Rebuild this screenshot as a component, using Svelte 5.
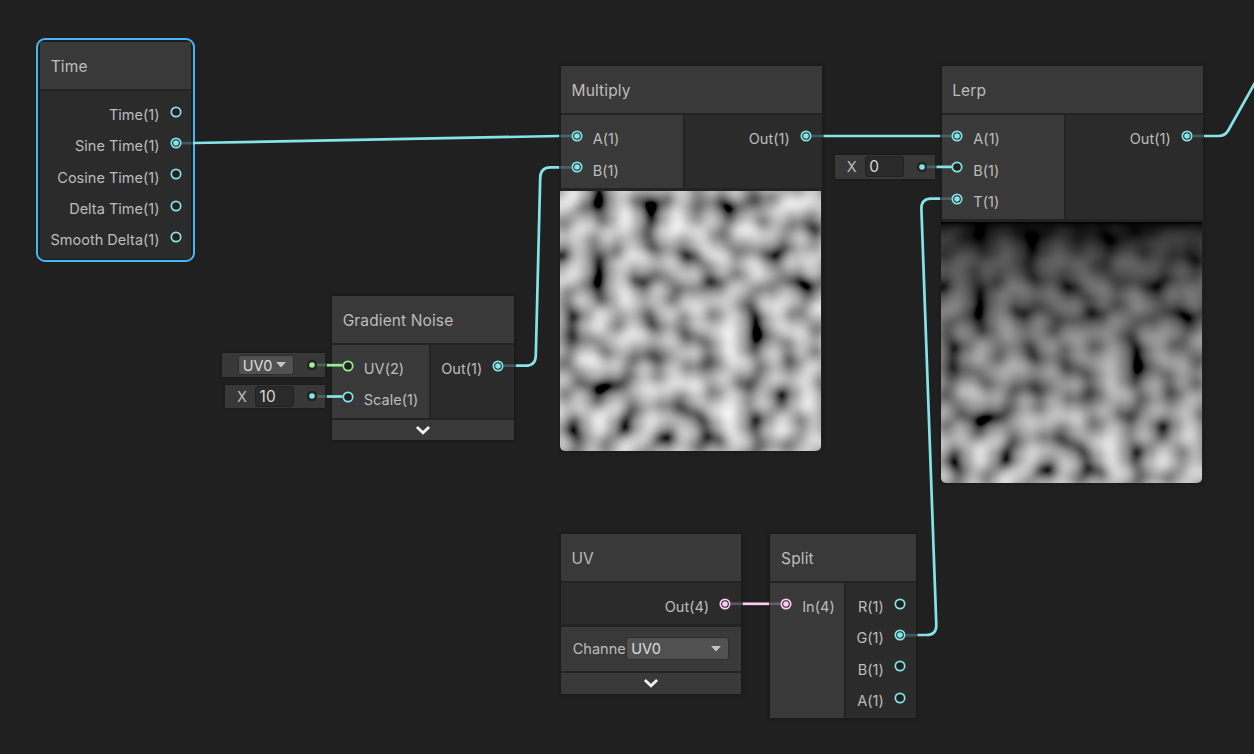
<script>
  const CYAN = '#84e4e7';
  const PINK = '#fbcbf4';
  const GREEN = '#9aef92';

  const out = (label, on = false, color = CYAN) => ({ label, on, color });

  const nodes = [
    {
      title: 'Time', x: 40, y: 42, w: 151, selected: true,
      outputs: [out('Time(1)'), out('Sine Time(1)', true), out('Cosine Time(1)'), out('Delta Time(1)'), out('Smooth Delta(1)')]
    },
    {
      title: 'Multiply', x: 560.9, y: 66.3, w: 260.7, left: 122.3, preview: 'flat',
      inputs: [out('A(1)', true), out('B(1)', true)], outputs: [out('Out(1)', true)]
    },
    {
      title: 'Lerp', x: 941.5, y: 66.3, w: 261, left: 122.7, preview: 'fade',
      inputs: [out('A(1)', true), out('B(1)'), out('T(1)', true)], outputs: [out('Out(1)', true)]
    },
    {
      title: 'Gradient Noise', x: 332, y: 296, w: 182, left: 96.6, footer: true,
      inputs: [out('UV(2)', false, GREEN), out('Scale(1)')], outputs: [out('Out(1)', true)]
    },
    { title: 'UV', x: 560.7, y: 534, w: 180.3, outputs: [out('Out(4)', true, PINK)], channel: true, footer: true },
    {
      title: 'Split', x: 770.4, y: 534, w: 145.2, left: 73.6,
      inputs: [out('In(4)', true, PINK)], outputs: [out('R(1)'), out('G(1)', true), out('B(1)'), out('A(1)')]
    }
  ];

  const slots = [
    { kind: 'select', value: 'UV0', x: 221.7, y: 353, w: 103.7, h: 24, color: GREEN },
    { kind: 'number', value: '10', x: 225, y: 384.5, w: 100.4, h: 23.7, color: CYAN },
    { kind: 'number', value: '0', x: 834.7, y: 154.9, w: 100.4, h: 23.7, color: CYAN }
  ];

  const edges = [
    { d: 'M193 143L559 136', color: CYAN },
    { d: 'M516 365.7H525.5Q535.5 365.7 535.8 355.7L540.2 178Q540.5 167.4 550.5 167.4H559', color: CYAN },
    { d: 'M823.5 136H940', color: CYAN },
    { d: 'M940 198.7H931Q921.2 198.7 921.4 208.7L936.3 625Q936.6 635 926.6 635H917.5', color: CYAN },
    { d: 'M1204 136H1218.5Q1225 136 1228.2 130.5L1256 81', color: CYAN },
    { d: 'M742.8 603.8H769', color: PINK },
    { d: 'M327 365.2H342.6', color: GREEN },
    { d: 'M327 396.5H342.6', color: CYAN },
    { d: 'M936.5 166.9H952', color: CYAN }
  ];

  const stubs = [
    [181.3, 143.1, 193, CYAN], [559, 136, 571.3, CYAN], [559, 167.4, 571.3, CYAN], [503.8, 365.7, 516, CYAN],
    [811.7, 136, 823.5, CYAN], [940, 136, 952, CYAN], [940, 198.7, 952, CYAN], [1192.7, 136, 1204, CYAN],
    [905.7, 635.2, 917.5, CYAN], [731, 603.8, 742.8, PINK], [769, 603.8, 780.8, PINK],
    [317, 365, 327, GREEN], [317, 396.5, 327, CYAN], [926.5, 166.9, 936.5, CYAN]
  ];

  function direction(px, py) {
    px = px % 289;
    py = py % 289;
    let x = (((34 * px + 1) * px) % 289) + py;
    x = ((34 * x + 1) * x) % 289;
    x = ((x / 41) % 1) * 2 - 1;
    const gx = x - Math.floor(x + 0.5);
    const gy = Math.abs(x) - 0.5;
    const len = Math.hypot(gx, gy);
    return [gx / len, gy / len];
  }

  function noise(x, y) {
    const ix = Math.floor(x), iy = Math.floor(y);
    const fx = x - ix, fy = y - iy;
    const corner = (dx, dy) => {
      const g = direction(ix + dx, iy + dy);
      return g[0] * (fx - dx) + g[1] * (fy - dy);
    };
    const ease = (t) => t * t * t * (t * (t * 6 - 15) + 10);
    const u = ease(fx), v = ease(fy);
    const a = corner(0, 0) * (1 - v) + corner(0, 1) * v;
    const b = corner(1, 0) * (1 - v) + corner(1, 1) * v;
    return a * (1 - u) + b * u + 0.5;
  }

  const SINE = 0.8;
  const toSrgb = (c) => (c <= 0.0031308 ? 12.92 * c : 1.055 * Math.pow(c, 1 / 2.4) - 0.055);

  function paint(canvas, mode) {
    const size = canvas.width;
    const ctx = canvas.getContext('2d');
    const image = ctx.createImageData(size, size);
    for (let j = 0; j < size; j++) {
      const v = 1 - (j + 0.5) / size;
      for (let i = 0; i < size; i++) {
        const u = (i + 0.5) / size;
        let value = noise(u * 10, v * 10) * SINE;
        if (mode === 'fade') value *= 1 - v;
        const level = 255 * toSrgb(Math.min(1, Math.max(0, value)));
        image.data.set([level, level, level, 255], (j * size + i) * 4);
      }
    }
    ctx.putImageData(image, 0, 0);
  }
</script>

{#snippet ring(port)}
  <svg class="ring" viewBox="0 0 12 12">
    <circle cx="6" cy="6" r="4.7" fill="#212121" stroke={port.color} stroke-width="1.7" />
    {#if port.on}<circle cx="6" cy="6" r="2.8" fill={port.color} />{/if}
  </svg>
{/snippet}

<main>
  {#each nodes as node}
    <section class="node" class:selected={node.selected} style="left:{node.x}px;top:{node.y}px;width:{node.w}px">
      <header>{node.title}</header>
      <div class="ports">
        {#if node.inputs}
          <div class="inputs" style="width:{node.left}px">
            {#each node.inputs as port}
              <div class="port">{@render ring(port)}<span>{port.label}</span></div>
            {/each}
          </div>
        {/if}
        <div class="outputs">
          {#each node.outputs as port}
            <div class="port"><span>{port.label}</span>{@render ring(port)}</div>
          {/each}
        </div>
      </div>
      {#if node.channel}
        <div class="channel">
          <span class="name">Channe</span>
          <span class="select wide">UV0<svg viewBox="0 0 10 6"><path d="M0 0H10L5 5.5Z" /></svg></span>
        </div>
      {/if}
      {#if node.footer}
        <div class="footer">
          <svg viewBox="0 0 16 10"><path d="M1.9 1.9L8 7.7L14.1 1.9" /></svg>
        </div>
      {/if}
      {#if node.preview}
        <canvas width="261" height="261" use:paint={node.preview}></canvas>
      {/if}
    </section>
  {/each}

  {#each slots as slot}
    <div class="slot" style="left:{slot.x}px;top:{slot.y}px;width:{slot.w}px;height:{slot.h}px">
      {#if slot.kind === 'select'}
        <span class="select">{slot.value}<svg viewBox="0 0 10 6"><path d="M0 0H10L5 5.5Z" /></svg></span>
      {:else}
        <span class="axis">X</span><span class="input">{slot.value}</span>
      {/if}
      <svg class="ring" viewBox="0 0 12 12">
        <circle cx="6" cy="6" r="5.2" fill="#212121" />
        <circle cx="6" cy="6" r="2.8" fill={slot.color} />
      </svg>
    </div>
  {/each}

  <svg class="edges" viewBox="0 0 1254 754">
    {#each edges as edge}<path d={edge.d} stroke={edge.color} stroke-width="2.7" />{/each}
    {#each stubs as [x1, y, x2, color]}
      <path d="M{x1} {y}H{x2}" stroke={color} stroke-width="2.7" opacity="0.25" />
    {/each}
  </svg>
</main>

<style>
  :global(body) {
    margin: 0;
    background: #202020;
  }
  main {
    position: relative;
    width: 1254px;
    height: 754px;
    overflow: hidden;
    background: #202020;
    font-family: Inter, sans-serif;
    font-size: 14.5px;
    letter-spacing: 0.02px;
    color: #bdbdbd;
  }
  .node {
    position: absolute;
    background: #232323;
    box-shadow: 0 0 3px 1px #191919;
  }
  .selected::after {
    content: '';
    position: absolute;
    inset: -4.3px -4.3px -3.5px;
    border: 2px solid #44b8f6;
    border-radius: 9px;
  }
  header {
    height: 47px;
    box-sizing: border-box;
    padding-left: 10.7px;
    line-height: 49px;
    font-size: 15.5px;
    letter-spacing: 0.12px;
    background: #393939;
    margin-bottom: 2px;
  }
  .ports {
    display: flex;
    gap: 2px;
  }
  .inputs,
  .outputs {
    box-sizing: border-box;
    padding: 5.2px 9.8px 5px;
  }
  .selected .outputs {
    padding-right: 9.4px;
    padding-bottom: 6px;
  }
  .inputs {
    flex: none;
    background: #393939;
  }
  .outputs {
    flex: 1;
    background: #2b2b2b;
  }
  .port {
    display: flex;
    align-items: center;
    gap: 10px;
    height: 31.3px;
    white-space: nowrap;
  }
  .port span {
    position: relative;
    top: 2.7px;
  }
  .outputs .port {
    justify-content: flex-end;
  }
  .ring {
    width: 12px;
    height: 12px;
    flex: none;
  }
  .channel {
    display: flex;
    align-items: center;
    height: 44.5px;
    margin-top: 2.2px;
    background: #393939;
  }
  .name {
    width: 65.6px;
    box-sizing: border-box;
    padding-left: 12px;
  }
  .select {
    display: flex;
    align-items: center;
    justify-content: space-between;
    box-sizing: border-box;
    width: 56px;
    height: 19.5px;
    padding: 0 7px 0 4px;
    margin-left: 16px;
    background: #515151;
    border: 1px solid #2d2d2d;
    border-radius: 3px;
    color: #dedede;
    letter-spacing: -0.1px;
  }
  .select svg {
    width: 10px;
    height: 6px;
    fill: #c4c4c4;
  }
  .wide {
    width: 102.3px;
    height: 23px;
    margin-left: 0;
    padding-right: 7px;
  }
  .footer {
    display: flex;
    align-items: center;
    justify-content: center;
    height: 20.6px;
    margin-top: 2px;
    background: #393939;
  }
  .footer svg {
    width: 16px;
    height: 10px;
    fill: none;
    stroke: #f0f0f0;
    stroke-width: 2.8;
  }
  canvas {
    display: block;
    width: 261px;
    height: 260.4px;
    margin: 2.8px 0 0 -0.9px;
    border-radius: 0 0 5px 5px;
  }
  .slot {
    position: absolute;
    display: flex;
    align-items: center;
    box-sizing: border-box;
    padding-right: 7.3px;
    background: #383838;
    box-shadow: 0 0 2px #151515;
  }
  .slot .ring {
    margin-left: auto;
  }
  .axis {
    width: 30px;
    box-sizing: border-box;
    padding-left: 12px;
  }
  .input {
    box-sizing: border-box;
    width: 39px;
    height: 21px;
    padding-left: 3.6px;
    line-height: 19px;
    background: #2a2a2a;
    border: 1px solid #212121;
    border-radius: 3px;
    color: #d8d8d8;
    font-size: 15.5px;
  }
  .edges {
    position: absolute;
    inset: 0;
    width: 1254px;
    height: 754px;
    fill: none;
  }
</style>
